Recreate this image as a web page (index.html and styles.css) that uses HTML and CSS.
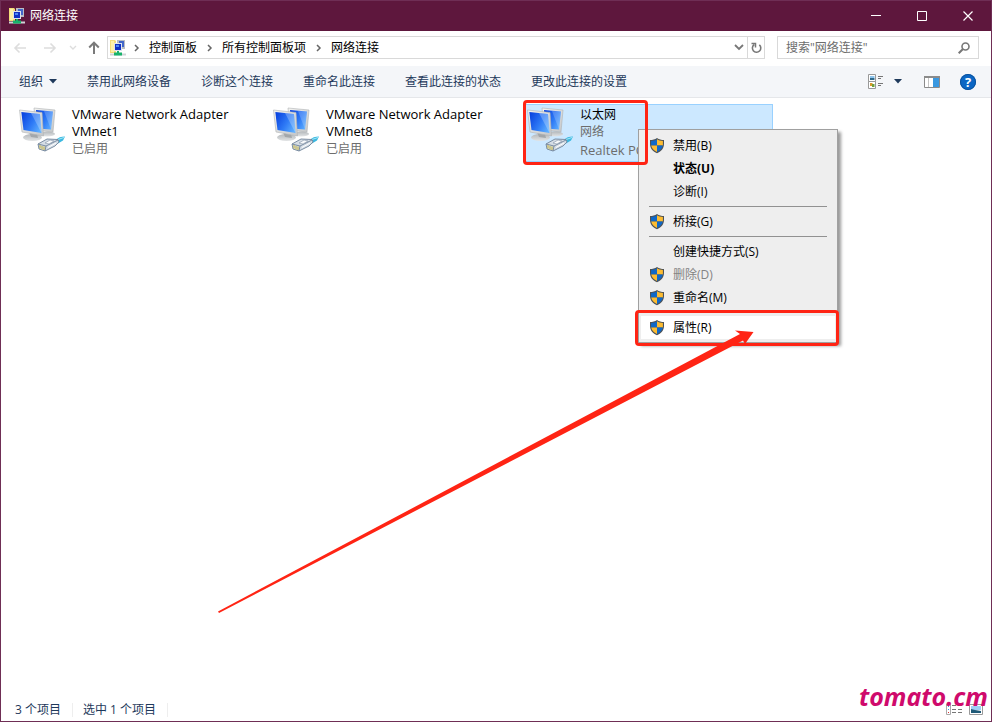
FILE: index.html
```html
<!DOCTYPE html>
<html lang="zh-CN">
<head>
    <meta charset="UTF-8">
    <meta name="viewport" content="width=device-width, initial-scale=1.0">
    <title>网络连接</title>
    <link rel="stylesheet" href="styles.css">
</head>
<body>
    <!-- Shared icons -->
    <svg class="defs" width="0" height="0" aria-hidden="true">
        <defs>
            <linearGradient id="screen" x1="0" y1="0.2" x2="1" y2="0.8">
                <stop offset="0" stop-color="#0b45e0"/>
                <stop offset="0.55" stop-color="#2f7bf6"/>
                <stop offset="1" stop-color="#5fb0ff"/>
            </linearGradient>
            <linearGradient id="frame" x1="0" y1="0" x2="1" y2="1">
                <stop offset="0" stop-color="#f4f4f2"/>
                <stop offset="1" stop-color="#c4c6c8"/>
            </linearGradient>
            <linearGradient id="foot" x1="0" y1="0" x2="0" y2="1">
                <stop offset="0" stop-color="#b4b8bb"/>
                <stop offset="1" stop-color="#e2e4e5"/>
            </linearGradient>
        </defs>
        <symbol id="icon-net" viewBox="0 0 16 16">
            <path d="M0 0h5l1 1v12H0z" fill="#f3dc7a"/>
            <path d="M1 1h3v11H1z" fill="#fdf0a8"/>
            <path d="M7 0h8v9H7z" fill="#b9bcc4"/>
            <path d="M9 1h5v6H9z" fill="#4166c9"/>
            <path d="M4 3h8v8H4z" fill="#dfe3ec"/>
            <path d="M5 4h6v6H5z" fill="#1030c4"/>
            <path d="M6 5h3v2H6z" fill="#4e87f2"/>
            <path d="M7 11h2v2H7z" fill="#17b26a"/>
            <path d="M0 13.500h16v2H0z" fill="#cfd3d6"/>
            <path d="M4 12.500h8v3H4z" fill="#17b26a"/>
        </symbol>
        <symbol id="icon-adapter" viewBox="0 0 48 48">
            <ellipse cx="28" cy="28" rx="8" ry="2.500" fill="url(#foot)"/>
            <path d="M15 2l21 2-2 22-17-2z" fill="url(#frame)" stroke="#aeb1b4" stroke-width="0.6"/>
            <path d="M17 4l17 1.500-2 18-14-1z" fill="url(#screen)"/>
            <path d="M25 5l9 0.500-2 18z" fill="#fff" opacity="0.2"/>
            <ellipse cx="13.500" cy="31.500" rx="9.500" ry="3.500" fill="url(#foot)"/>
            <path d="M10 26l8 2 1 4-7-1z" fill="#a3a7aa"/>
            <path d="M0.500 4L23 6.500 24.500 30 3 26z" fill="url(#frame)" stroke="#aeb1b4" stroke-width="0.6"/>
            <path d="M2.300 6L21 8l1.500 19L4.500 24z" fill="url(#screen)"/>
            <path d="M12 7l9 1 1.500 19z" fill="#fff" opacity="0.25"/>
            <path d="M37 34c2-2.500 5-3.500 9-3.500l-2 4-5 3z" fill="#3bb8e0"/>
            <path d="M39 33.500l6-2" stroke="#a5e8f7" stroke-width="1"/>
            <path d="M19 38l9-5 11 0.500 1 2.500-4 4-10 5-6-2z" fill="#d5dde5" stroke="#71839a" stroke-width="0.9"/>
            <path d="M19 38l8 2 12-6M27 40l-1 5" fill="none" stroke="#71839a" stroke-width="0.9"/>
            <path d="M26 37l5-3 4 1-5 3z" fill="#f7f9fa" stroke="#8494a8" stroke-width="0.6"/>
            <path d="M21 39v3.500M23 40v3.500M25 40.500v3.500" stroke="#c3b13d" stroke-width="1"/>
            <path d="M29 41.500l8-4.500" stroke="#fff" stroke-width="1"/>
        </symbol>
        <symbol id="icon-shield" viewBox="0 0 16 16">
            <path d="M8 0c2 1.500 4.500 2 7 2v4c0 4.500-3 7.500-7 9.200C4 13.500 1 10.500 1 6V2c2.500 0 5-0.500 7-2z" fill="#4d5256"/>
            <path d="M8 1.300C6.500 2.300 4.300 3 2.100 3.100V7.500H8z" fill="#0f68c8"/>
            <path d="M8 1.300c1.500 1 3.700 1.700 5.900 1.800v4.400H8z" fill="#fdbc31"/>
            <path d="M2.200 7.500H8V14C4.800 12.500 2.700 10.500 2.200 7.500z" fill="#fdbc31"/>
            <path d="M13.800 7.500H8V14c3.200-1.500 5.300-3.500 5.800-6.500z" fill="#0f68c8"/>
        </symbol>
        <symbol id="icon-chevron" viewBox="0 0 6 8">
            <path d="M1 1l3 3-3 3" fill="none" stroke="#666" stroke-width="1.500"/>
        </symbol>
    </svg>

    <div class="window">
        <header class="titlebar">
            <svg class="app-icon" width="16" height="16"><use href="#icon-net"/></svg>
            <h1 class="title">网络连接</h1>
            <div class="window-buttons">
                <button type="button" class="win-btn" aria-label="最小化"><svg width="10" height="10"><path d="M0 4.500h10" stroke="#fff"/></svg></button>
                <button type="button" class="win-btn" aria-label="最大化"><svg width="10" height="10"><path d="M0.500 0.500h9v9h-9z" fill="none" stroke="#fff"/></svg></button>
                <button type="button" class="win-btn" aria-label="关闭"><svg width="10" height="10"><path d="M0.500 0.500l9 9M9.500 0.500l-9 9" stroke="#fff" stroke-width="1.200"/></svg></button>
            </div>
        </header>

        <nav class="navbar">
            <div class="nav-arrows">
                <button type="button" class="icon-btn" aria-label="后退"><svg width="14" height="12"><path d="M13 6H2M6.500 1.500L2 6l4.500 4.500" fill="none" stroke="#ddd" stroke-width="1.600"/></svg></button>
                <button type="button" class="icon-btn" aria-label="前进"><svg width="14" height="12"><path d="M1 6h11M7.500 1.500L12 6l-4.500 4.500" fill="none" stroke="#ddd" stroke-width="1.600"/></svg></button>
                <button type="button" class="icon-btn recent" aria-label="最近"><svg width="8" height="6"><path d="M1 1l3 3 3-3" fill="none" stroke="#ddd" stroke-width="1.400"/></svg></button>
                <button type="button" class="icon-btn up" aria-label="上移"><svg width="12" height="13"><path d="M6 13V2M1.200 6.500L6 1.700l4.800 4.800" fill="none" stroke="#7a7a7a" stroke-width="2"/></svg></button>
            </div>
            <div class="address">
                <svg class="address-icon" width="16" height="16"><use href="#icon-net"/></svg>
                <svg class="chevron" width="6" height="8"><use href="#icon-chevron"/></svg>
                <a href="#">控制面板</a>
                <svg class="chevron" width="6" height="8"><use href="#icon-chevron"/></svg>
                <a href="#">所有控制面板项</a>
                <svg class="chevron" width="6" height="8"><use href="#icon-chevron"/></svg>
                <a href="#">网络连接</a>
                <button type="button" class="icon-btn history" aria-label="历史记录"><svg width="10" height="7"><path d="M1 1l4 4 4-4" fill="none" stroke="#777" stroke-width="1.800"/></svg></button>
                <button type="button" class="icon-btn refresh" aria-label="刷新"><svg width="11" height="12"><path d="M8.300 2.800a4.200 4.200 0 1 1-5-0.300" fill="none" stroke="#777" stroke-width="1.600"/><path d="M0.500 1.500h4v4" fill="none" stroke="#777" stroke-width="1.500"/></svg></button>
            </div>
            <div class="search">
                <input type="search" aria-label="搜索" placeholder='搜索"网络连接"'>
                <svg width="12" height="12"><circle cx="7.500" cy="4.500" r="3.500" fill="none" stroke="#777" stroke-width="1.600"/><path d="M5 7L0.700 11.300" stroke="#777" stroke-width="2"/></svg>
            </div>
        </nav>

        <div class="toolbar">
            <button type="button" class="tool">组织<svg class="caret" width="8" height="5"><path d="M0 0h8L4 4.500z" fill="#1e395b"/></svg></button>
            <button type="button" class="tool">禁用此网络设备</button>
            <button type="button" class="tool">诊断这个连接</button>
            <button type="button" class="tool">重命名此连接</button>
            <button type="button" class="tool">查看此连接的状态</button>
            <button type="button" class="tool">更改此连接的设置</button>
            <div class="tool-icons">
                <button type="button" class="icon-btn" aria-label="更改视图">
                    <svg width="16" height="15">
                        <path d="M0.500 0.500h7v7h-7zM0.500 7.500h7v7h-7z" fill="#fff" stroke="#999"/>
                        <path d="M2 2h4.500v2H2z" fill="#8ec5ee"/><path d="M2 4h4.500v2H2z" fill="#2f6a8c"/>
                        <path d="M2 9h2.500v3H2z" fill="#d99b2b"/><path d="M4 10h2.500v3H4z" fill="#6ea03c"/>
                        <path d="M10 2.500h5M10 4.500h3M10 9.500h5M10 11.500h3" stroke="#777"/>
                    </svg>
                </button>
                <button type="button" class="icon-btn" aria-label="更多选项"><svg width="8" height="5"><path d="M0 0h8L4 4.500z" fill="#1e395b"/></svg></button>
                <button type="button" class="icon-btn preview" aria-label="预览窗格">
                    <svg width="16" height="12">
                        <path d="M0.500 0.500h15v11h-15z" fill="#fff" stroke="#8b8b8b"/>
                        <path d="M0 0h16v2H0z" fill="#8b8b8b"/>
                        <path d="M4.500 2v9" stroke="#c4c4c4"/><path d="M9 2h6v9H9z" fill="#3a98e0"/>
                    </svg>
                </button>
                <button type="button" class="icon-btn help" aria-label="帮助">?</button>
            </div>
        </div>

        <main class="content">
            <ul class="items">
                <li class="item">
                    <svg class="item-icon" width="48" height="48"><use href="#icon-adapter"/></svg>
                    <div class="item-text">
                        <span class="item-name">VMware Network Adapter VMnet1</span>
                        <span class="item-info">已启用</span>
                    </div>
                </li>
                <li class="item">
                    <svg class="item-icon" width="48" height="48"><use href="#icon-adapter"/></svg>
                    <div class="item-text">
                        <span class="item-name">VMware Network Adapter VMnet8</span>
                        <span class="item-info">已启用</span>
                    </div>
                </li>
                <li class="item selected">
                    <svg class="item-icon" width="48" height="48"><use href="#icon-adapter"/></svg>
                    <div class="item-text">
                        <span class="item-name cjk">以太网</span>
                        <span class="item-info">网络</span>
                        <span class="item-info latin">Realtek PCIe</span>
                    </div>
                </li>
            </ul>
        </main>

        <footer class="statusbar">
            <span class="status">3 个项目</span>
            <span class="status">选中 1 个项目</span>
            <div class="view-icons">
                <button type="button" class="icon-btn" aria-label="详细信息">
                    <svg width="16" height="11">
                        <path d="M0.500 0.500h4v10h-4z" fill="#fff" stroke="#aaa"/>
                        <path d="M2 2h1v1H2zM2 5h1v1H2z" fill="#3a98e0"/><path d="M2 8h1v1H2z" fill="#d33"/>
                        <path d="M6 1.500h4M12 1.500h4M6 5.500h4M12 5.500h4M6 8.500h4M12 8.500h4" stroke="#777"/>
                    </svg>
                </button>
                <button type="button" class="icon-btn" aria-label="大图标">
                    <svg width="14" height="11">
                        <path d="M0.500 0.500h13v10h-13z" fill="#fff" stroke="#999"/>
                        <path d="M2 2h10v4H2z" fill="#9fd0f5"/><path d="M2 5l4 1 6 1v2H2z" fill="#1f5a78"/>
                    </svg>
                </button>
            </div>
        </footer>
    </div>

    <div class="menu">
        <button type="button" class="menu-item"><svg width="16" height="16"><use href="#icon-shield"/></svg>禁用(B)</button>
        <button type="button" class="menu-item default">状态(U)</button>
        <button type="button" class="menu-item">诊断(I)</button>
        <hr>
        <button type="button" class="menu-item"><svg width="16" height="16"><use href="#icon-shield"/></svg>桥接(G)</button>
        <hr>
        <button type="button" class="menu-item">创建快捷方式(S)</button>
        <button type="button" class="menu-item" disabled><svg width="16" height="16"><use href="#icon-shield"/></svg>删除(D)</button>
        <button type="button" class="menu-item"><svg width="16" height="16"><use href="#icon-shield"/></svg>重命名(M)</button>
        <hr>
        <button type="button" class="menu-item active"><svg width="16" height="16"><use href="#icon-shield"/></svg>属性(R)</button>
    </div>

    <!-- Red marks: adapter, then the menu entry -->
    <div class="mark mark-adapter"></div>
    <div class="mark mark-properties"></div>
    <svg class="arrow" width="540" height="285" aria-hidden="true">
        <path d="M0 281.500L522 4l-5-3.500 18.500 1.500L527 14l-2-3.500L1 283z" fill="#ff2414"/>
    </svg>
    <div class="watermark">tomato.cm</div>
</body>
</html>
```

FILE: styles.css
```css
* { margin: 0; padding: 0; box-sizing: border-box; }
:root { --frame: #6f2e55; --title: #5e173d; --bar: #f4f6f9; --line: #d9d9d9; --navy: #1e395b; --red: #ff2414; }
body { position: relative; background: white; color: black; font: 12px/18px "Open Sans", "Noto Sans CJK SC", sans-serif; overflow: hidden; }
button, input { font: inherit; color: inherit; background: none; border: none; }
svg { display: block; flex: none; }
.defs { position: absolute; }

.window { display: flex; flex-direction: column; height: 100vh; border: 1px solid var(--frame); }
.icon-btn { display: flex; align-items: center; justify-content: center; }

.titlebar { display: flex; align-items: center; height: 30px; padding-left: 8px; background: var(--title); color: white; }
.title { margin-left: 5px; font-size: 12px; font-weight: normal; }
.window-buttons { display: flex; margin-left: auto; }
.win-btn { display: flex; align-items: center; justify-content: center; width: 46px; height: 30px; }

.navbar { display: flex; align-items: center; height: 35px; padding: 0 12px; padding-bottom: 2px; }
.nav-arrows { display: flex; align-items: center; gap: 16px; width: 94px; }
.recent { margin-left: -4px; }
.up { margin-left: -5px; }
.address { display: flex; flex: 1; align-items: center; height: 23px; padding-left: 2px; border: 1px solid var(--line); }
.address a { color: black; text-decoration: none; }
.chevron { margin: 0 9px 0 10px; }
.address-icon + .chevron { margin-left: 8px; }
.history { width: 16px; height: 21px; margin-left: auto; }
.refresh { width: 17px; height: 21px; border-left: 1px solid var(--line); }
.search { display: flex; align-items: center; width: 202px; height: 23px; margin-left: 12px; padding: 0 8px; border: 1px solid var(--line); }
.search input { flex: 1; min-width: 0; outline: none; }
.search input::placeholder { color: #6d6d6d; opacity: 1; }

.toolbar { display: flex; align-items: center; gap: 30px; height: 32px; padding: 0 15px 0 18px; background: var(--bar); border-bottom: 1px solid #e5e7ea; }
.tool { display: flex; align-items: center; color: var(--navy); white-space: nowrap; }
.caret { margin-left: 6px; }
.tool-icons { display: flex; align-items: center; gap: 10px; margin-left: auto; }
.preview { margin: 0 10px 0 12px; }
.help { width: 16px; height: 16px; border-radius: 50%; background: #0b66c4; outline: 1px solid #0a529c; outline-offset: -1px; color: white; font-size: 13px; font-weight: bold; }

.content { flex: 1; padding: 6px 14px; }
.items { display: grid; grid-template-columns: repeat(auto-fill, 250px); gap: 4px; list-style: none; }
.item { display: flex; height: 58px; padding: 1px 3px; border: 1px solid transparent; }
.item.selected { background: #cce8ff; border-color: #99d1ff; }
.item-text { display: flex; flex-direction: column; flex: 1; min-width: 0; margin-left: 5px; }
.item-name { font-size: 13px; line-height: 17px; }
.item-name.cjk { font-size: 12px; }
.item-info { color: #6d6d6d; white-space: nowrap; }
.item-info.latin { font-size: 13px; }

.statusbar { display: flex; align-items: center; height: 23px; padding: 0 8px 0 14px; color: var(--navy); }
.status { padding-right: 11px; margin-right: 10px; border-right: 1px solid #eee; line-height: 14px; }
.view-icons { display: flex; gap: 7px; margin-left: auto; }

.menu { position: absolute; left: 638px; top: 129px; width: 200px; padding: 4px 2px 3px; background: #eee; border: 1px solid #a0a0a0; box-shadow: 3px 3px 3px rgba(0,0,0,0.4); }
.menu-item { display: flex; align-items: center; position: relative; width: 100%; height: 23px; padding-left: 32px; text-align: left; }
.menu-item svg { position: absolute; left: 8px; }
.menu-item.default { font-weight: bold; }
.menu-item.active { background: white; }
.menu-item:disabled { color: #838383; }
.menu hr { height: 1px; margin: 3px 8px; border: none; background: #919191; }

.mark { position: absolute; border: 3px solid var(--red); border-radius: 4px; }
.mark-adapter { left: 523px; top: 100px; width: 125px; height: 65px; }
.mark-properties { left: 635px; top: 310px; width: 204px; height: 36px; }
.arrow { position: absolute; left: 218px; top: 330px; }
.watermark { position: absolute; right: 4px; bottom: 8px; color: #cf0a6c; font-size: 25px; font-weight: bold; font-style: italic; line-height: 36px; }
```
